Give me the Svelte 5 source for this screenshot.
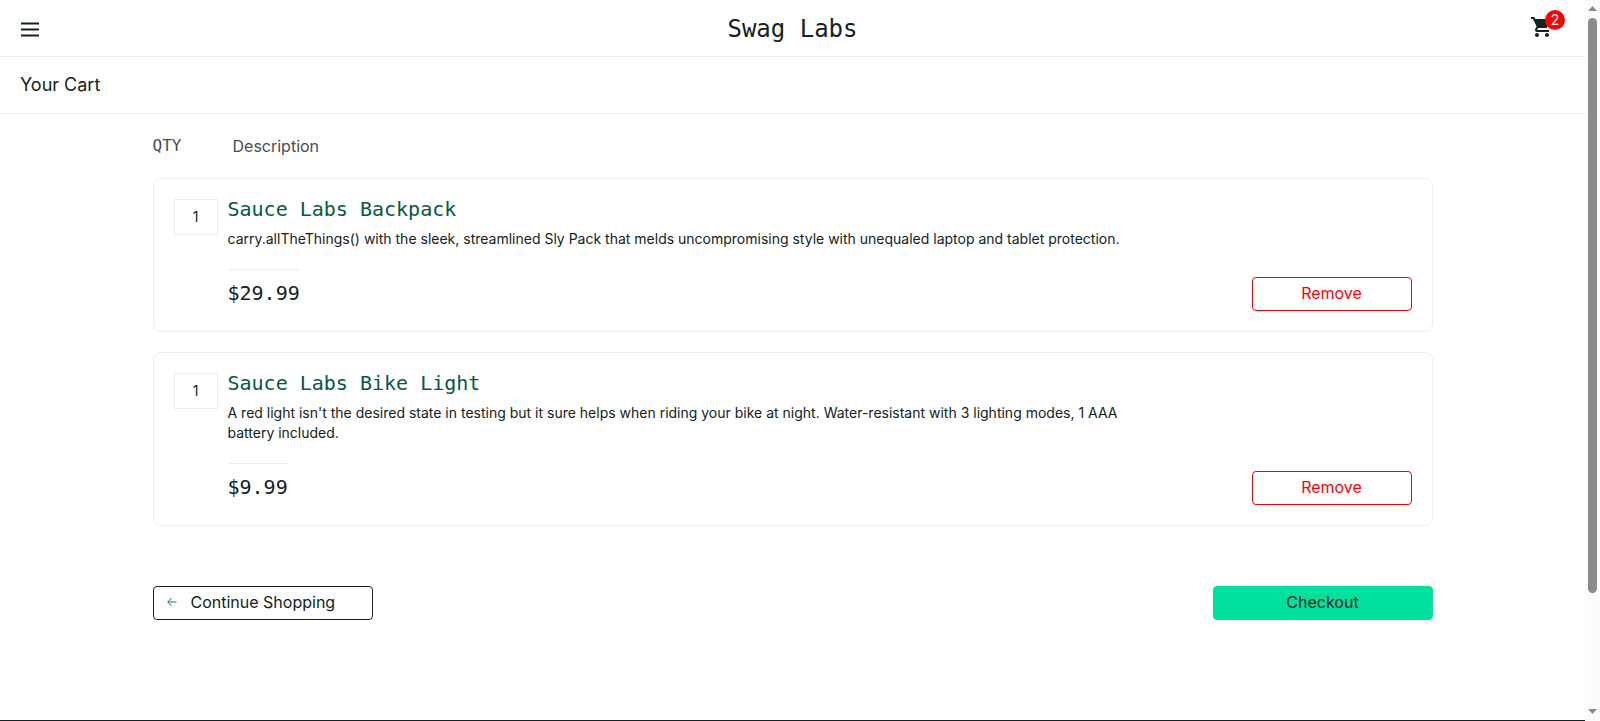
<script>
  let items = $state([
    {
      id: 4,
      qty: 1,
      name: 'Sauce Labs Backpack',
      text: 'carry.allTheThings() with the sleek, streamlined Sly Pack that melds uncompromising style with unequaled laptop and tablet protection.',
      price: 29.99
    },
    {
      id: 0,
      qty: 1,
      name: 'Sauce Labs Bike Light',
      text: "A red light isn't the desired state in testing but it sure helps when riding your bike at night. Water-resistant with 3 lighting modes, 1 AAA battery included.",
      price: 9.99
    }
  ]);

  const remove = (id) => (items = items.filter((item) => item.id !== id));
</script>

<div class="window">
  <div class="page">
    <header class="bar">
      <button class="menu" aria-label="Open menu">
        <svg width="18" height="16" viewBox="0 0 18 16" aria-hidden="true">
          <path d="M0 2.500h18M0 8.500h18M0 14.500h18" stroke="#132322" stroke-width="2.200" />
        </svg>
      </button>
      <div class="logo">Swag Labs</div>
      <a class="cart" href="#cart" aria-label="Shopping cart">
        <svg width="24" height="24" viewBox="0 0 24 24" fill="#132322" aria-hidden="true">
          <path d="M7 18c-1.1 0-1.99.9-1.99 2S5.900 22 7 22s2-.9 2-2-.9-2-2-2zM1 2v2h2l3.600 7.590-1.350 2.450c-.16.28-.25.61-.25.960 0 1.100.9 2 2 2h12v-2H7.420c-.14 0-.25-.11-.25-.25l.03-.12.900-1.630h7.450c.75 0 1.410-.41 1.750-1.030l3.580-6.490A1 1 0 0 0 20 4H5.210l-.94-2H1zm16 16c-1.100 0-1.990.9-1.990 2s.89 2 1.990 2 2-.9 2-2-.9-2-2-2z" />
        </svg>
        <span class="badge">{items.length}</span>
      </a>
    </header>

    <div class="subhead"><h1>Your Cart</h1></div>

    <main>
      <div class="labels">
        <span class="count">QTY</span>
        <span>Description</span>
      </div>

      <div class="list">
        {#each items as item (item.id)}
          <article class="card">
            <div class="qty">{item.qty}</div>
            <div class="info">
              <a class="name" href="#item-{item.id}">{item.name}</a>
              <p>{item.text}</p>
              <div class="buy">
                <div class="price">${item.price}</div>
                <button class="btn remove" onclick={() => remove(item.id)}>Remove</button>
              </div>
            </div>
          </article>
        {/each}
      </div>

      <div class="actions">
        <button class="btn back">
          <svg width="10" height="10" viewBox="0 0 10 10" aria-hidden="true">
            <path d="M9.500 5H1M4.500 1L.7 5l3.800 4" fill="none" stroke="#0a7f55" stroke-width="1" />
          </svg>
          Continue Shopping
        </button>
        <button class="btn checkout">Checkout</button>
      </div>
    </main>

    <footer></footer>
  </div>

  <div class="scrollbar" aria-hidden="true">
    <svg width="9" height="5" viewBox="0 0 9 5"><path d="M0 5L4.500 0 9 5z" fill="#8b8b8b" /></svg>
    <div class="track"><div class="thumb"></div></div>
    <svg width="9" height="5" viewBox="0 0 9 5"><path d="M0 0L4.500 5 9 0z" fill="#8b8b8b" /></svg>
  </div>
</div>

<style>
  :global(body) {
    margin: 0;
    background: #fff;
  }

  .window {
    display: flex;
    height: 100vh;
    overflow: hidden;
    color: #132322;
    font: 400 16px/20px Inter, sans-serif;
  }

  .window :global(*) {
    box-sizing: border-box;
  }

  .page {
    display: flex;
    flex: 1;
    flex-direction: column;
    min-width: 0;
  }

  .bar {
    display: grid;
    grid-template-columns: 1fr auto 1fr;
    align-items: center;
    height: 57px;
    padding: 0 20px;
    border-bottom: 1px solid #ededed;
  }

  .menu {
    display: flex;
    justify-self: start;
    padding: 2px 1px 0;
    border: 0;
    background: none;
    cursor: pointer;
  }

  .logo {
    padding-top: 2px;
    font: 400 24px/32px "DejaVu Sans Mono", monospace;
  }

  .cart {
    position: relative;
    display: flex;
    justify-self: end;
    padding: 0 11px 2px 0;
  }

  .badge {
    position: absolute;
    top: -5px;
    right: 0;
    width: 20px;
    height: 20px;
    border-radius: 50%;
    background: #ff0000;
    color: #fff;
    font-size: 14px;
    text-align: center;
  }

  .cart,
  .name {
    text-decoration: none;
  }

  .subhead {
    padding: 18px 20px;
    border-bottom: 1px solid #ededed;
  }

  h1 {
    margin: 0;
    font-size: 18px;
    font-weight: 400;
    line-height: 20px;
  }

  main {
    width: 100%;
    max-width: 1280px;
    margin: 0 auto;
  }

  .labels {
    display: grid;
    grid-template-columns: 80px 1fr;
    padding: 22px 0;
    color: #484c55;
  }

  .count {
    font-family: "DejaVu Sans Mono", monospace;
  }

  .list {
    display: grid;
    gap: 20px;
  }

  .card {
    display: flex;
    align-items: flex-start;
    gap: 10px;
    padding: 20px;
    border: 1px solid #ededed;
    border-radius: 8px;
  }

  .qty {
    flex: none;
    width: 44px;
    height: 36px;
    border: 1px solid #ededed;
    font-size: 14px;
    line-height: 34px;
    text-align: center;
  }

  .info {
    flex: 1;
  }

  .name {
    display: block;
    color: #035a43;
    font: 400 20px/20px "DejaVu Sans Mono", monospace;
  }

  p {
    max-width: 900px;
    margin: 10px 0 20px;
    font-size: 14px;
  }

  .buy {
    display: flex;
    align-items: flex-end;
    justify-content: space-between;
  }

  .price {
    padding: 11px 0 6px;
    border-top: 1px solid #ededed;
    font: 400 20px/24px "DejaVu Sans Mono", monospace;
  }

  .btn {
    height: 34px;
    padding: 0 12px 2px;
    border: 1px solid;
    border-radius: 4px;
    background: #fff;
    color: #132322;
    font: inherit;
    cursor: pointer;
  }

  .remove {
    width: 160px;
    color: #ff0000;
  }

  .actions {
    display: flex;
    justify-content: space-between;
    margin-top: 60px;
  }

  .back {
    display: flex;
    align-items: center;
    gap: 14px;
    width: 220px;
    padding-left: 13px;
    border-color: #132322;
  }

  .checkout {
    width: 220px;
    border-color: #00e19d;
    background: #00e19d;
  }

  footer {
    height: 1px;
    margin-top: auto;
    background: #132322;
  }

  .scrollbar {
    display: flex;
    flex: none;
    flex-direction: column;
    align-items: center;
    gap: 7px;
    width: 15px;
    padding: 6px 0 7px;
    background: #fcfcfc;
  }

  .track {
    flex: 1;
  }

  .thumb {
    width: 9px;
    height: 84%;
    border-radius: 5px;
    background: #8b8b8b;
  }
</style>
